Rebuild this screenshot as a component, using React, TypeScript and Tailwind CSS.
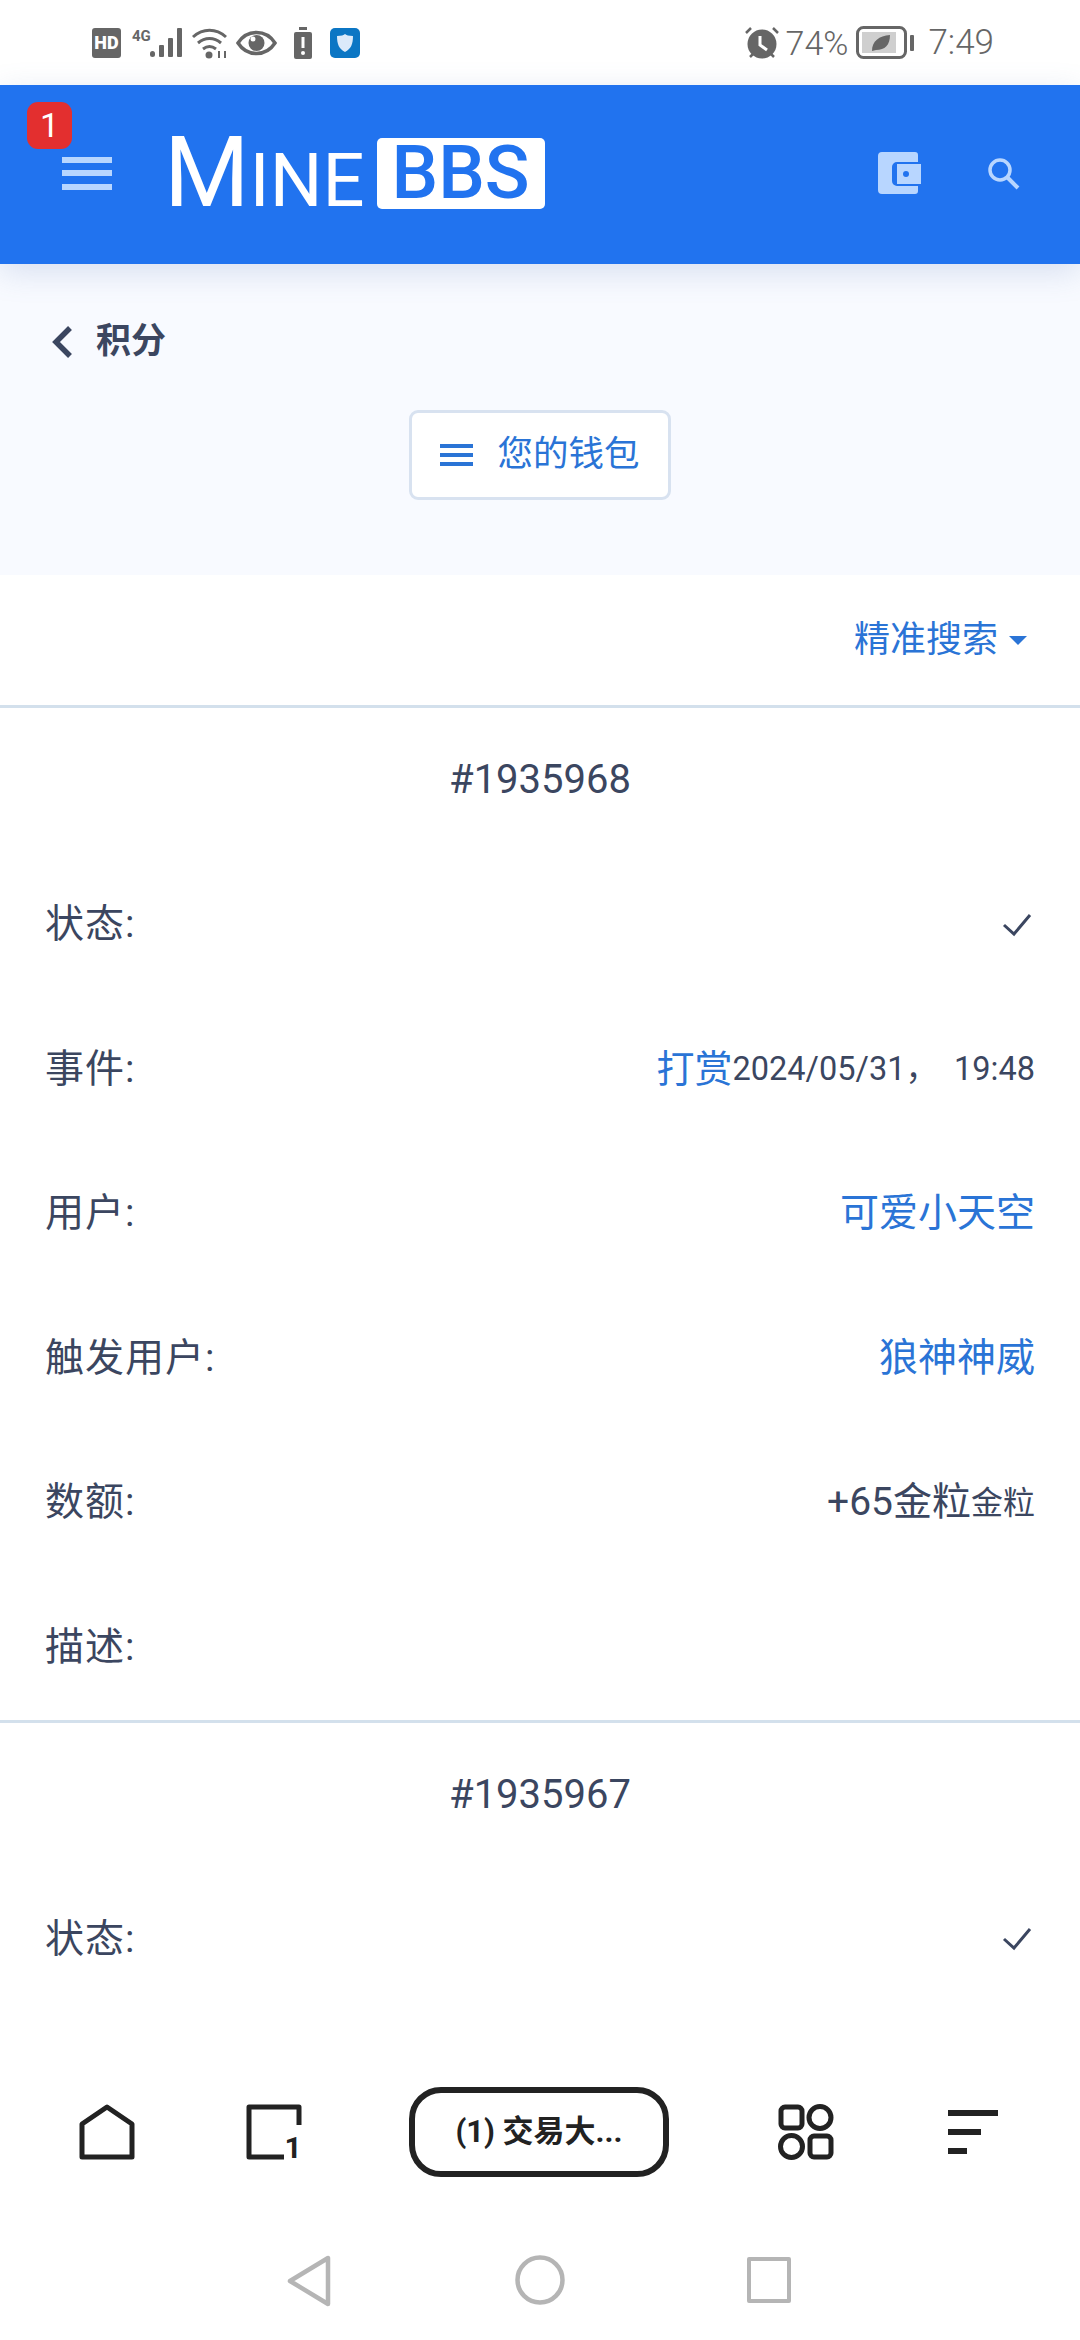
import { ReactNode } from 'react';

const CJK = "font-['Roboto','Noto_Sans_CJK_SC',sans-serif]";

function StatusBar() {
  return (
    <div className="flex h-[85px] items-center bg-white pl-[92px] pr-[86px] text-[#666666]">
      <svg width="270" height="34" viewBox="0 0 270 34" className="shrink-0">
        {/* HD */}
        <rect x="0" y="2" width="29" height="30" rx="3" fill="#666" />
        <text x="14.500" y="23" textAnchor="middle" fontSize="18" fontWeight="900" fill="#fff" fontFamily="Roboto">HD</text>
        {/* signal */}
        <text x="40" y="15" fontSize="15" fontWeight="700" fill="#666" fontFamily="Roboto">4G</text>
        <rect x="58" y="25" width="5" height="6" rx="2.500" fill="#666" />
        <rect x="67" y="19" width="5" height="12" rx="1" fill="#666" />
        <rect x="76" y="12" width="5" height="19" rx="1" fill="#666" />
        <rect x="85" y="2" width="5" height="29" rx="1" fill="#666" />
        {/* wifi */}
        <path d="M101 11c10-9 23-9 33 0M106 17c7-6 16-6 23 0M111 23c4-3 9-3 13 0" stroke="#666" strokeWidth="3" fill="none" />
        <circle cx="117" cy="29" r="3.500" fill="#666" />
        <path d="M127 32v-7M133 32v-7" stroke="#666" strokeWidth="2" />
        {/* eye */}
        <path d="M146 17c9-14 28-14 37 0-9 14-28 14-37 0z" stroke="#666" strokeWidth="3.500" fill="none" />
        <circle cx="164.500" cy="17" r="8" fill="#666" />
        <circle cx="161" cy="13" r="2.500" fill="#fff" />
        {/* battery saver */}
        <rect x="207" y="1" width="8" height="3" fill="#666" />
        <rect x="202" y="6" width="18" height="27" rx="2" fill="#666" />
        <path d="M211 11v11" stroke="#fff" strokeWidth="3" />
        <circle cx="211" cy="27" r="2" fill="#fff" />
        {/* shield app */}
        <rect x="238" y="2" width="30" height="30" rx="5" fill="#0b76c4" />
        <path d="M245 10c4 0 7-1 8-2 1 1 4 2 8 2 0 8-2 13-8 16-6-3-8-8-8-16z" fill="#dbeafa" />
      </svg>
      <div className="flex-1" />
      <svg width="36" height="34" viewBox="0 0 36 34" className="shrink-0">
        <circle cx="17" cy="18" r="14.500" fill="#666" />
        <path d="M15 10v9l7 5" stroke="#fff" strokeWidth="3" fill="none" />
        <path d="M1 7l5-5M33 7l-5-5M5 31l3-3M29 31l-3-3" stroke="#666" strokeWidth="2.500" />
      </svg>
      <span className={`${CJK} ml-[5px] text-[34px] leading-none font-light`}>74%</span>
      <svg width="60" height="34" viewBox="0 0 60 34" className="ml-[8px] shrink-0">
        <rect x="1.500" y="1.500" width="48" height="30" rx="6" fill="none" stroke="#666" strokeWidth="3" />
        <rect x="6" y="6" width="34" height="21" fill="#cfcfcf" />
        <path d="M16 25c0-10 7-15 18-16 0 10-5 15-14 15z" fill="#666" />
        <rect x="54" y="9" width="4" height="16" rx="1" fill="#666" />
      </svg>
      <span className={`${CJK} ml-[12px] text-[35px] leading-none font-light`}>7:49</span>
    </div>
  );
}

function Header() {
  return (
    <div className="relative z-10 flex h-[179px] items-center bg-[#2173ef] pb-[3px] shadow-[0_8px_30px_rgba(90,120,180,0.2)]">
      <span className="absolute left-[27px] top-[17px] flex h-[47px] w-[45px] items-center justify-center rounded-[11px] bg-[#e32f2f] font-['Roboto',sans-serif] text-[34px] text-white">
        1
      </span>
      <div className="ml-[62px] flex h-[33px] w-[50px] flex-col justify-between">
        <div className="h-[6px] bg-[#b8d6ff]" />
        <div className="h-[6px] bg-[#b8d6ff]" />
        <div className="h-[6px] bg-[#b8d6ff]" />
      </div>
      <div className="ml-[52px] flex items-center">
        <div className="flex items-baseline font-['Roboto',sans-serif] font-normal leading-none text-white">
          <span className="text-[98px]">M</span>
          <span className="text-[74px]">INE</span>
        </div>
        <span className="ml-[12px] flex h-[71px] w-[168px] items-center justify-center rounded-[5px] bg-white font-['Roboto',sans-serif] text-[74px] font-medium leading-none text-[#2173ef]">
          BBS
        </span>
      </div>
      <div className="flex-1" />
      <svg width="44" height="42" viewBox="0 0 44 42" className="shrink-0">
        <path d="M5 0h33a3 3 0 0 1 3 3v7H20a5 5 0 0 0-5 5v14a5 5 0 0 0 5 5h21v5a3 3 0 0 1-3 3H5a4 4 0 0 1-4-4V4a4 4 0 0 1 4-4z" fill="#b8d6ff" />
        <path d="M20 12h24v20H20z" fill="#b8d6ff" />
        <circle cx="29" cy="22" r="3" fill="#2173ef" />
      </svg>
      <svg width="33" height="33" viewBox="0 0 33 33" className="ml-[66px] mr-[60px] shrink-0">
        <circle cx="13" cy="13" r="10" fill="none" stroke="#b8d6ff" strokeWidth="3.500" />
        <path d="M20 20l11 11" stroke="#b8d6ff" strokeWidth="4" />
      </svg>
    </div>
  );
}

function SubHeader() {
  return (
    <div className="flex h-[311px] flex-col bg-[#f8faff]">
      <div className="mt-[56px] flex h-[44px] items-center pl-[50px]">
        <svg width="24" height="34" viewBox="0 0 24 34">
          <path d="M20 3L6 17l14 14" fill="none" stroke="#3b4660" strokeWidth="5.500" />
        </svg>
        <span className={`${CJK} ml-[22px] text-[35px] font-bold text-[#3b4660]`}>积分</span>
      </div>
      <div className="mt-[46px] flex justify-center">
        <button className="flex h-[90px] w-[262px] items-center justify-center rounded-[9px] border-[3px] border-[#d8e2f0] bg-white">
          <span className="flex h-[22px] w-[33px] flex-col justify-between">
            <span className="h-[4px] bg-[#2a74d6]" />
            <span className="h-[4px] bg-[#2a74d6]" />
            <span className="h-[4px] bg-[#2a74d6]" />
          </span>
          <span className={`${CJK} ml-[24px] text-[35.5px] text-[#2a74d6]`}>您的钱包</span>
        </button>
      </div>
    </div>
  );
}

function Row({ label, children }: { label: string; children?: ReactNode }) {
  return (
    <div className="flex h-[144.5px] shrink-0 items-center justify-between px-[45px]">
      <span className="tracking-[1px] text-[#3b4660]">{label}</span>
      <div className="flex items-center">{children}</div>
    </div>
  );
}

function Check() {
  return (
    <svg width="30" height="24" viewBox="0 0 30 24" className="mr-[3px]">
      <path d="M2 12l10 9L28 2" fill="none" stroke="#3b4660" strokeWidth="3" />
    </svg>
  );
}

function Title({ id }: { id: string }) {
  return <div className="flex h-[144.5px] shrink-0 items-center justify-center text-[40px] text-[#3b4660]">{id}</div>;
}

function Divider() {
  return <div className="h-[3px] shrink-0 bg-[#d3e0ec]" />;
}

function Content() {
  return (
    <div className={`${CJK} flex min-h-0 flex-1 flex-col overflow-hidden bg-white text-[39px] leading-none`}>
      <div className="flex h-[130px] shrink-0 items-center justify-end pr-[53px] text-[36px] text-[#2a74d6]">
        精准搜索
        <span className="ml-[11px] h-0 w-0 border-x-[9px] border-t-[9px] border-x-transparent border-t-[#2a74d6]" />
      </div>
      <Divider />
      <Title id="#1935968" />
      <Row label="状态:">
        <Check />
      </Row>
      <Row label="事件:">
        <span className="text-[38px] text-[#2a74d6]">打赏</span>
        <span className="whitespace-pre text-[32.5px] text-[#3b4660]">2024/05/31，  19:48</span>
      </Row>
      <Row label="用户:">
        <span className="text-[#2a74d6]">可爱小天空</span>
      </Row>
      <Row label="触发用户:">
        <span className="text-[#2a74d6]">狼神神威</span>
      </Row>
      <Row label="数额:">
        <span className="text-[#3b4660]">+65金粒</span>
        <span className="text-[32px] text-[#3b4660]">金粒</span>
      </Row>
      <Row label="描述:" />
      <Divider />
      <Title id="#1935967" />
      <Row label="状态:">
        <Check />
      </Row>
    </div>
  );
}

function BrowserBar() {
  return (
    <div className="flex h-[180px] shrink-0 items-center bg-white pt-[4px]">
      <svg width="56" height="56" viewBox="0 0 56 56" className="ml-[79px] shrink-0">
        <path d="M28 3L53 20v33H3V20z" fill="none" stroke="#222" strokeWidth="5" strokeLinejoin="round" />
      </svg>
      <svg width="56" height="68" viewBox="0 0 56 68" className="ml-[111px] shrink-0">
        <path d="M38 59H3V9h50v18" fill="none" stroke="#222" strokeWidth="5" strokeLinejoin="round" />
        <text x="47" y="60" textAnchor="middle" fontSize="30" fontWeight="700" fill="#222" fontFamily="Roboto">1</text>
      </svg>
      <div className={`${CJK} ml-[107px] flex h-[90px] w-[260px] items-center justify-center rounded-[32px] border-[6px] border-[#222] text-[31px] font-bold text-[#222]`}>
        (1) 交易大...
      </div>
      <svg width="56" height="56" viewBox="0 0 56 56" className="ml-[109px] shrink-0">
        <rect x="3" y="3" width="21" height="21" rx="4" fill="none" stroke="#222" strokeWidth="5" />
        <circle cx="42" cy="13.500" r="11" fill="none" stroke="#222" strokeWidth="5" />
        <circle cx="13.500" cy="42.500" r="11" fill="none" stroke="#222" strokeWidth="5" />
        <rect x="32" y="32" width="21" height="21" rx="4" fill="none" stroke="#222" strokeWidth="5" />
      </svg>
      <div className="ml-[114px] flex h-[44px] w-[50px] shrink-0 flex-col justify-between">
        <div className="h-[6px] w-[50px] bg-[#222]" />
        <div className="h-[6px] w-[33px] bg-[#222]" />
        <div className="h-[6px] w-[19px] bg-[#222]" />
      </div>
    </div>
  );
}

function NavBar() {
  return (
    <div className="flex h-[120px] shrink-0 items-start bg-white pt-[35px]">
      <svg width="44" height="52" viewBox="0 0 44 52" className="ml-[287px] shrink-0">
        <path d="M41 3v46L3 26z" fill="none" stroke="#b5b5b5" strokeWidth="4.500" strokeLinejoin="round" />
      </svg>
      <svg width="50" height="50" viewBox="0 0 50 50" className="ml-[184px] shrink-0">
        <circle cx="25" cy="25" r="22.500" fill="none" stroke="#b5b5b5" strokeWidth="4.500" />
      </svg>
      <div className="ml-[182px] mt-[2px] h-[46px] w-[44px] rounded-[2px] border-[4.500px] border-[#b5b5b5]" />
    </div>
  );
}

export default function App() {
  return (
    <div className="flex h-[2340px] w-[1080px] flex-col overflow-hidden bg-white">
      <StatusBar />
      <Header />
      <SubHeader />
      <Content />
      <BrowserBar />
      <NavBar />
    </div>
  );
}
